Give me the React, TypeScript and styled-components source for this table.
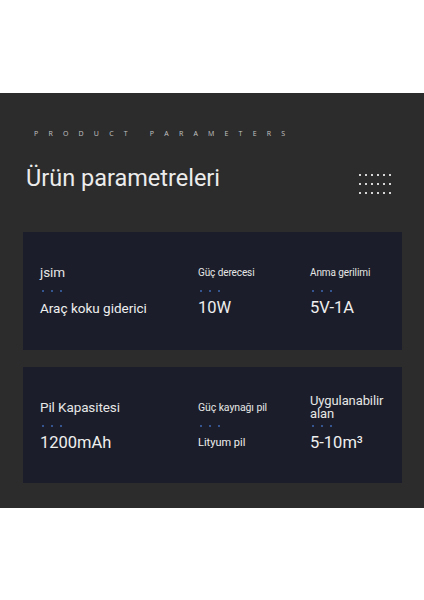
import React from 'react'
import styled, { createGlobalStyle } from 'styled-components'

const GlobalStyle = createGlobalStyle`
  html, body {
    margin: 0;
    padding: 0;
    background: #ffffff;
  }
  body {
    font-family: Roboto, "Noto Sans", sans-serif;
  }
`

const Page = styled.div`
  width: 424px;
  height: 600px;
  padding-top: 93px;
  box-sizing: border-box;
  background: #ffffff;
`
const Section = styled.section`
  height: 415px;
  background: #2c2c2c;
  padding: 36px 22px 0 23px;
  box-sizing: border-box;
`
const Kicker = styled.div`
  height: 10px;
  line-height: 10px;
  padding-left: 11px;
  font-family: "Open Sans", sans-serif;
  font-size: 7px;
  letter-spacing: 10.2px;
  color: #c4c4c4;
  white-space: nowrap;
`
const TitleRow = styled.div`
  display: flex;
  justify-content: space-between;
  align-items: center;
  height: 28px;
  margin-top: 25px;
  padding-right: 11px;
`
const Title = styled.h1`
  margin: 0;
  padding-left: 3px;
  font-family: Roboto, sans-serif;
  font-weight: 400;
  font-size: 23.5px;
  line-height: 28px;
  color: #ececec;
`
const DotGrid = styled.div`
  display: grid;
  grid-template-columns: repeat(6, 2px);
  column-gap: 4px;
  row-gap: 7px;
  margin-top: 12px;
`
const Dot = styled.span<{ $color: string }>`
  width: 2px;
  height: 2px;
  background: ${(p) => p.$color};
`
const Card = styled.div<{ $height: number; $gap: number }>`
  display: grid;
  grid-template-columns: 158px 112px 1fr;
  height: ${(p) => p.$height}px;
  margin-top: ${(p) => p.$gap}px;
  padding: 30px 10px 0 17px;
  box-sizing: border-box;
  background: #1b1e2a;
`
const Cell = styled.div`
  display: flex;
  flex-direction: column;
`
const Label = styled.div<{ $size: number }>`
  display: flex;
  align-items: center;
  height: 20px;
  font-size: ${(p) => p.$size}px;
  line-height: 13px;
  color: #e6e6e6;
  letter-spacing: -0.1px;
`
const Ticks = styled.div`
  display: flex;
  gap: 7px;
  margin: 8px 0 0 2px;
`
const Value = styled.div<{ $size: number }>`
  height: 20px;
  margin-top: 6px;
  font-size: ${(p) => p.$size}px;
  line-height: 20px;
  color: #efefef;
  white-space: nowrap;
`

type TParam = {
  label: string
  value: string
  labelSize: number
  valueSize: number
}

const rowOne: TParam[] = [
  { label: 'jsim', value: 'Araç koku giderici', labelSize: 13.5, valueSize: 13.5 },
  { label: 'Güç derecesi', value: '10W', labelSize: 10, valueSize: 16.5 },
  { label: 'Anma gerilimi', value: '5V-1A', labelSize: 10, valueSize: 16.5 },
]
const rowTwo: TParam[] = [
  { label: 'Pil Kapasitesi', value: '1200mAh', labelSize: 13.5, valueSize: 16.5 },
  { label: 'Güç kaynağı pil', value: 'Lityum pil', labelSize: 10.5, valueSize: 11 },
  { label: 'Uygulanabilir alan', value: '5-10m³', labelSize: 13, valueSize: 16.5 },
]

const Param = ({ label, value, labelSize, valueSize }: TParam) => (
  <Cell>
    <Label $size={labelSize}>{label}</Label>
    <Ticks>
      {[0, 1, 2].map((i) => (
        <Dot key={i} $color="#34558f" />
      ))}
    </Ticks>
    <Value $size={valueSize}>{value}</Value>
  </Cell>
)

const App = () => {
  return (
    <Page>
      <GlobalStyle />
      <Section>
        <Kicker>PRODUCT PARAMETERS</Kicker>
        <TitleRow>
          <Title>Ürün parametreleri</Title>
          <DotGrid>
            {Array.from({ length: 18 }).map((_, i) => (
              <Dot key={i} $color="#d6d6d6" />
            ))}
          </DotGrid>
        </TitleRow>
        <Card $height={118} $gap={40}>
          {rowOne.map((p) => (
            <Param key={p.label} {...p} />
          ))}
        </Card>
        <Card $height={116} $gap={17}>
          {rowTwo.map((p) => (
            <Param key={p.label} {...p} />
          ))}
        </Card>
      </Section>
    </Page>
  )
}

export default App
